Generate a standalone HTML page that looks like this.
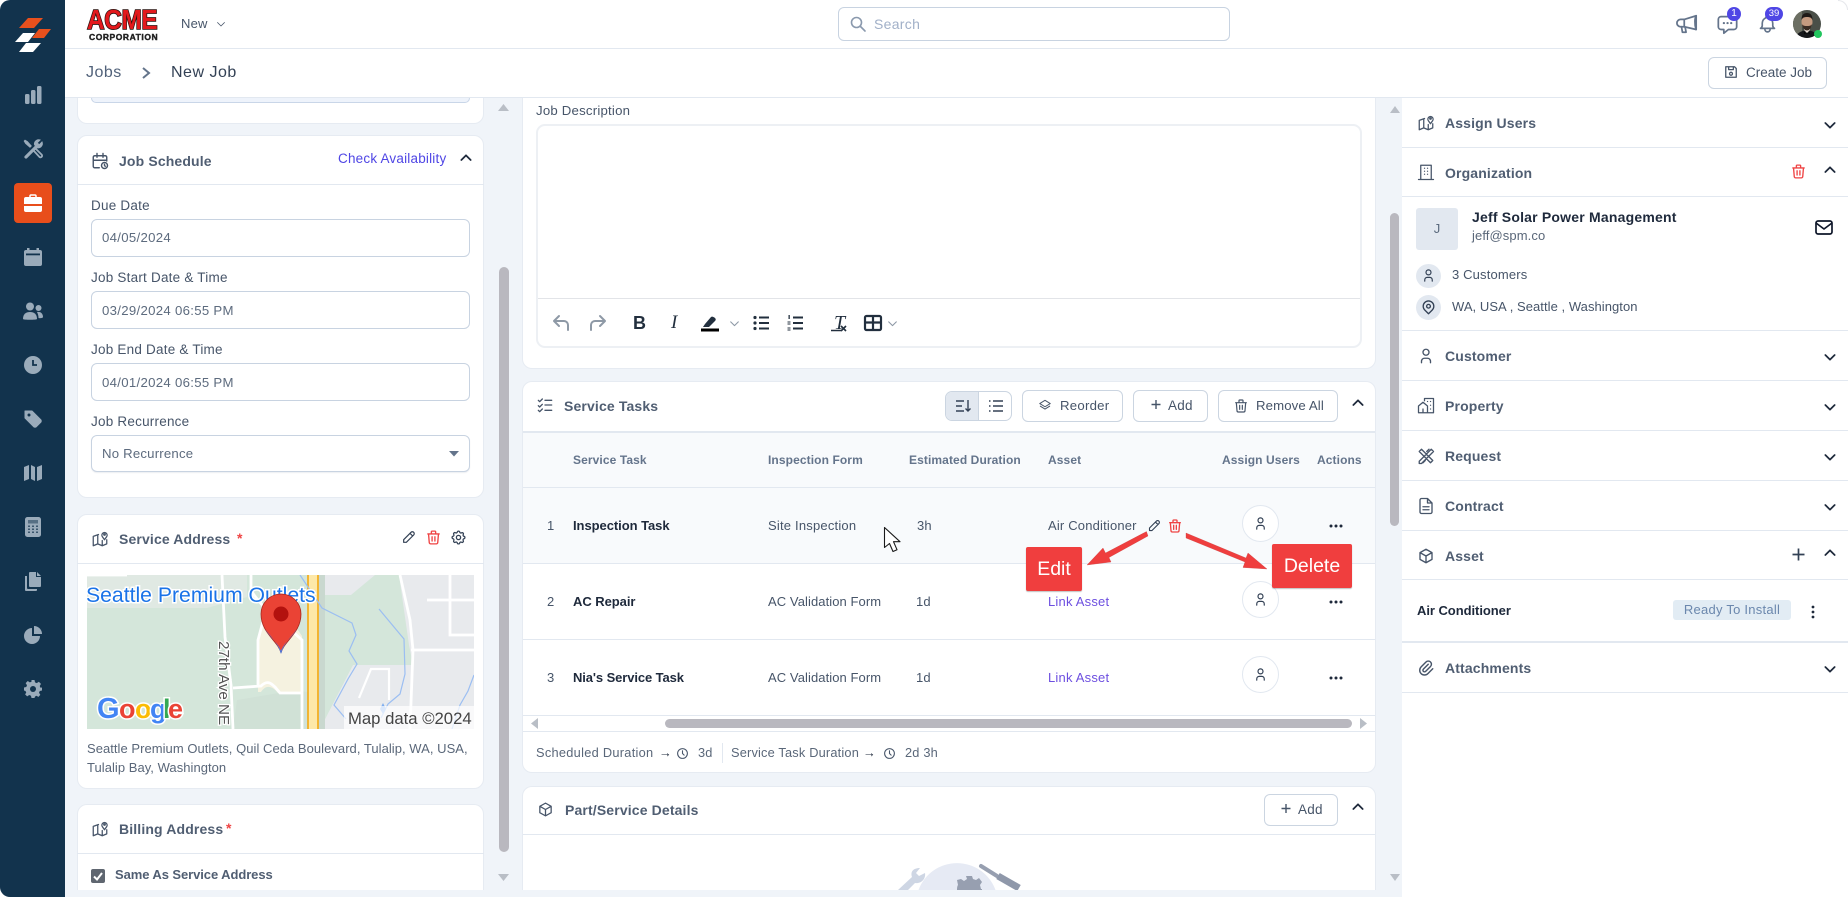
<!DOCTYPE html>
<html lang="en"><head><meta charset="utf-8"><title>New Job</title>
<style>
html,body{margin:0;padding:0;width:1848px;height:897px;overflow:hidden;background:#fff;font-family:"Liberation Sans",sans-serif;color:#475569}
*{box-sizing:border-box}
#root{position:relative;width:1848px;height:897px;overflow:hidden}
.a{position:absolute}
.t{position:absolute;white-space:nowrap;line-height:20px;font-size:13.5px;letter-spacing:.2px}
.h{font-weight:bold;font-size:14px;color:#505e72;letter-spacing:.14px}
.l{color:#475569;font-size:13.5px;letter-spacing:.22px}
.v{color:#5d6b7e;font-size:13.2px;letter-spacing:.3px}
.th{font-size:12px;font-weight:bold;color:#64748b;letter-spacing:.1px}
.card{position:absolute;background:#fff;border:1px solid #e6ebf2;border-radius:10px}
.inp{position:absolute;left:91px;width:379px;height:38px;background:#fff;border:1px solid #c8d3e1;border-radius:6px}
.btn{position:absolute;background:#fff;border:1px solid #cbd5e1;border-radius:6px}
.sep{position:absolute;left:1402px;width:446px;height:1px;background:#e2e8f0}
.rowline{position:absolute;left:523px;width:852px;height:1px;background:#e2e8f0}
svg{position:absolute;overflow:visible}
.s{fill:none;stroke:#475569;stroke-width:1.8;stroke-linecap:round;stroke-linejoin:round}
.dk{stroke:#1e293b}
.rd{stroke:#ef4444}
.f{fill:#9aabba}
</style></head><body><div id="root">
<svg width="0" height="0" style="position:absolute"><defs>
<symbol id="trash" viewBox="0 0 24 24"><path d="M4 7h16M10 11v6M14 11v6M5 7l1 12a2 2 0 0 0 2 2h8a2 2 0 0 0 2-2l1-12M9 7V4a1 1 0 0 1 1-1h4a1 1 0 0 1 1 1v3"/></symbol>
<symbol id="pencil" viewBox="0 0 24 24"><path d="M4 20h4L19 9a2.800 2.800 0 0 0-4-4L4 16v4M13.500 6.500l4 4"/></symbol>
<symbol id="gear" viewBox="0 0 24 24"><circle cx="12" cy="12" r="3"/><path d="M10.300 4.300c.4-1.800 3-1.800 3.400 0a1.700 1.700 0 0 0 2.600 1.100c1.500-.9 3.300.8 2.400 2.400a1.700 1.700 0 0 0 1 2.500c1.800.4 1.800 3 0 3.400a1.700 1.700 0 0 0-1 2.600c.9 1.500-.9 3.300-2.400 2.400a1.700 1.700 0 0 0-2.600 1c-.4 1.800-3 1.800-3.400 0a1.700 1.700 0 0 0-2.600-1c-1.500.9-3.300-.9-2.400-2.400a1.700 1.700 0 0 0-1-2.600c-1.800-.4-1.800-3 0-3.400a1.700 1.700 0 0 0 1-2.600c-.9-1.500.9-3.300 2.400-2.400 1 .6 2.300.1 2.600-1z"/></symbol>
<symbol id="person" viewBox="0 0 24 24"><circle cx="12" cy="7" r="4"/><path d="M6 21v-2a4 4 0 0 1 4-4h4a4 4 0 0 1 4 4v2"/></symbol>
<symbol id="mapi" viewBox="0 0 24 24"><path d="M10 6L3 8.500V21l6-2.500 6 2.500 6-2.500V13M9 6.500v12M15 14v7"/><circle cx="18" cy="6" r="1"/><path d="M18 13l-2.800-4a3.500 3.500 0 1 1 5.600 0z"/></symbol>
<symbol id="down" viewBox="0 0 24 24"><path d="M5 9l7 7 7-7"/></symbol>
<symbol id="up" viewBox="0 0 24 24"><path d="M5 15l7-7 7 7"/></symbol>
<symbol id="clock" viewBox="0 0 24 24"><circle cx="12" cy="12" r="9"/><path d="M12 7v5l3 3"/></symbol>
<symbol id="cube" viewBox="0 0 24 24"><path d="M12 3l8 4.500v9L12 21l-8-4.500v-9zM12 12l8-4.500M12 12v9M12 12L4 7.500"/></symbol>
</defs></svg>

<!-- bar & breadcrumb -->
<div class="a" style="left:65px;top:48px;width:1783px;height:1px;background:#e2e8f0"></div>
<div class="a" style="left:65px;top:97px;width:1783px;height:1px;background:#e2e8f0"></div>
<!-- content bg -->
<div class="a" style="left:65px;top:98px;width:1337px;height:799px;background:#f0f4f9"></div>

<!-- Logo -->
<div class="a" style="left:87px;top:5px;height:30px;font:bold 28px/30px 'Liberation Sans',sans-serif;color:#e3191c;letter-spacing:-.4px;-webkit-text-stroke:1.6px #26120f;paint-order:stroke fill;white-space:nowrap;transform:scaleX(.87);transform-origin:0 0">ACME</div>
<div class="t" style="left:89px;top:27px;font-size:8.5px;font-weight:bold;color:#222;letter-spacing:.55px;line-height:20px;-webkit-text-stroke:.4px #222">CORPORATION</div>
<div class="t" style="left:181px;top:14px;color:#475569;font-size:13px">New</div>
<svg class="s" style="left:215px;top:18px;stroke-width:1.6" width="12" height="12"><use href="#down" width="12" height="12"/></svg>

<!-- Search -->
<div class="a" style="left:838px;top:7px;width:392px;height:34px;border:1px solid #c8d3e1;border-radius:6px;background:#fff"></div>
<svg style="left:850px;top:16px" width="16" height="16" viewBox="0 0 16 16" fill="none" stroke="#8a99ad" stroke-width="1.600"><circle cx="6.500" cy="6.500" r="5"/><path d="M10.500 10.500l4.500 4.500" stroke-linecap="round"/></svg>
<div class="t" style="left:874px;top:14px;color:#a1b0c8;font-size:14px;letter-spacing:.3px">Search</div>

<!-- Top right icons -->
<svg style="left:1676px;top:13px" width="22" height="22" viewBox="0 0 24 24" fill="none" stroke="#64748b" stroke-width="1.900" stroke-linejoin="round" stroke-linecap="round"><path d="M22 3v15L9 15H5a3.500 3.500 0 0 1 0-8h4z"/><path d="M9 7v8M6 15l1 6h4l-1-5.500"/><path d="M22 3c-1.500 2-2 9-.2 15"/></svg>
<svg style="left:1716px;top:13px" width="23" height="22" viewBox="0 0 24 24" fill="none" stroke="#64748b" stroke-width="1.900" stroke-linejoin="round"><path d="M5 4h14a3 3 0 0 1 3 3v8a3 3 0 0 1-3 3h-6l-5 4v-4H5a3 3 0 0 1-3-3V7a3 3 0 0 1 3-3z"/><path d="M8 11h.1M12 11h.1M16 11h.1" stroke-width="2.400" stroke-linecap="round"/></svg>
<div class="a" style="left:1727px;top:7px;width:14px;height:14px;border-radius:50%;background:#4f46e5;color:#fff;font-size:10px;line-height:14px;text-align:center">1</div>
<svg style="left:1757px;top:13px" width="21" height="22" viewBox="0 0 24 24" fill="none" stroke="#64748b" stroke-width="1.900" stroke-linejoin="round" stroke-linecap="round"><path d="M10 5a2 2 0 1 1 4 0 7 7 0 0 1 4 6v3a4 4 0 0 0 2 3H4a4 4 0 0 0 2-3v-3a7 7 0 0 1 4-6M9 17v1a3 3 0 0 0 6 0v-1"/></svg>
<div class="a" style="left:1765px;top:7px;width:18px;height:14px;border-radius:7px;background:#4f46e5;color:#fff;font-size:9.500px;line-height:14px;text-align:center">39</div>
<svg style="left:1793px;top:10px" width="28" height="28" viewBox="0 0 28 28"><defs><clipPath id="av"><circle cx="14" cy="14" r="14"/></clipPath></defs><g clip-path="url(#av)"><rect width="28" height="28" fill="#4a4f48"/><rect x="0" width="9" height="28" fill="#6c6f63"/><path d="M3 28c1-6 6-7 11-8 5 1 10 2 11 8z" fill="#14161a"/><path d="M11 20l3 3 3-3v-3h-6z" fill="#e9dfd6"/><ellipse cx="14" cy="12" rx="5.500" ry="7" fill="#c49a80"/><path d="M8.500 10c0-5 2-7 5.500-7s5.500 2 5.500 7c-1-2-2-3-5.500-3s-4.500 1-5.500 3z" fill="#1f1a17"/><path d="M9 14c1 5 3 6.500 5 6.500s4-1.500 5-6.500c-1 2-3 2-5 2s-4 0-5-2z" fill="#3b2c24"/><path d="M12 23h4l1-1.500v3l-1-1h-4l-1 1v-3z" fill="#050505"/></g></svg>
<div class="a" style="left:1814px;top:30px;width:8px;height:8px;border-radius:50%;background:#22c55e"></div>
<div class="a" style="left:1838px;top:0;width:10px;height:10px;border:1px solid #e5e7eb;border-left:0;border-bottom:0;border-radius:0 10px 0 0"></div>

<!-- Breadcrumb -->
<div class="t" style="left:86px;top:63px;font-size:16px;color:#52627a;letter-spacing:.5px">Jobs</div>
<svg style="left:140px;top:66px" width="12" height="14" viewBox="0 0 12 14" fill="none" stroke="#64748b" stroke-width="2"><path d="M3 2l6 5-6 5"/></svg>
<div class="t" style="left:171px;top:63px;font-size:16px;color:#334155;letter-spacing:.5px">New Job</div>
<div class="btn" style="left:1708px;top:57px;width:119px;height:32px"></div>
<svg style="left:1724px;top:65px" width="14" height="14" viewBox="0 0 24 24" fill="none" stroke="#475569" stroke-width="2.200" stroke-linejoin="round"><path d="M3 3h15l3 3v15H3z"/><path d="M8 3v5h8V3"/><circle cx="12" cy="15" r="2.500"/></svg>
<div class="t" style="left:1746px;top:63px;font-size:13.5px;color:#475569;letter-spacing:0">Create Job</div>

<!-- LEFT COLUMN -->
<div class="card" style="left:77px;top:98px;width:407px;height:26px;border-top:0;border-radius:0 0 10px 10px"></div>
<div class="a" style="left:91px;top:98px;width:379px;height:5px;background:#eef3fb;border:1px solid #c9d6e8;border-radius:0 0 6px 6px;border-top:0"></div>

<div class="card" style="left:77px;top:135px;width:407px;height:363px"></div>
<div class="a" style="left:77px;top:184px;width:407px;height:1px;background:#e2e8f0"></div>
<svg class="s" style="left:91px;top:152px;stroke-width:1.900" width="18" height="18" viewBox="0 0 24 24"><path d="M11 21H5a2 2 0 0 1-2-2V7a2 2 0 0 1 2-2h14a2 2 0 0 1 2 2v5M16 2v5M8 2v5M3 11h18"/><circle cx="18" cy="18" r="4"/><path d="M18 16.500V18l1 1"/></svg>
<div class="t h" style="left:119px;top:151px">Job Schedule</div>
<div class="t" style="left:338px;top:149px;color:#4f46e5;font-size:13.5px;letter-spacing:.2px">Check Availability</div>
<svg class="s dk" style="left:458px;top:150px;stroke-width:2.600" width="16" height="16"><use href="#up" width="16" height="16"/></svg>

<div class="t l" style="left:91px;top:196px">Due Date</div>
<div class="inp" style="top:219px"></div>
<div class="t v" style="left:102px;top:228px">04/05/2024</div>
<div class="t l" style="left:91px;top:268px">Job Start Date &amp; Time</div>
<div class="inp" style="top:291px"></div>
<div class="t v" style="left:102px;top:301px">03/29/2024 06:55 PM</div>
<div class="t l" style="left:91px;top:340px">Job End Date &amp; Time</div>
<div class="inp" style="top:363px"></div>
<div class="t v" style="left:102px;top:373px">04/01/2024 06:55 PM</div>
<div class="t l" style="left:91px;top:412px">Job Recurrence</div>
<div class="inp" style="top:435px;height:37px;box-shadow:0 1px 1px rgba(100,116,139,.12)"></div>
<div class="t v" style="left:102px;top:444px;letter-spacing:.2px">No Recurrence</div>
<svg style="left:449px;top:451px" width="10" height="6"><path d="M0 0h10L5 5.500z" fill="#64748b"/></svg>

<div class="card" style="left:77px;top:514px;width:407px;height:275px"></div>
<div class="a" style="left:77px;top:563px;width:407px;height:1px;background:#e2e8f0"></div>
<svg class="s" style="left:91px;top:530px;stroke-width:1.700" width="18" height="18"><use href="#mapi" width="18" height="18"/></svg>
<div class="t h" style="left:119px;top:529px">Service Address</div>
<div class="t" style="left:237px;top:528px;color:#ef4444;font-size:14px;font-weight:bold">*</div>
<svg class="s dk" style="left:401px;top:529px;stroke:#334155" width="16" height="16"><use href="#pencil" width="16" height="16"/></svg>
<svg class="s rd" style="left:425px;top:529px;stroke-width:1.900" width="17" height="17"><use href="#trash" width="17" height="17"/></svg>
<svg class="s dk" style="left:450px;top:529px;stroke:#334155" width="17" height="17"><use href="#gear" width="17" height="17"/></svg>

<!-- Map -->
<svg style="left:87px;top:575px;overflow:hidden" width="387" height="154" viewBox="0 0 387 154">
<rect width="387" height="154" fill="#d4e6da"/>
<path d="M30 0h130v22L120 33H0V0z" fill="#e0e9e3"/>
<path d="M238 0h50l-24 20h-26z" fill="#e8eaed"/>
<path d="M312 0h75v154h-60v-5L326 90 322 70z" fill="#e8eaed"/>
<path d="M266 90h62v64h-95z" fill="#e8eaed"/>
<path d="M150 125l60-10 25 5v34H146z" fill="#d0e1d6"/>
<path d="M232 0h6v154h-6z" fill="#c9d8cf"/>
<path d="M171 64l9-24 24 5 11 16v57h-24c-8-10-14-6-17-1h-3z" fill="#f5f2e0"/>
<g fill="none" stroke="#fff" stroke-width="2.800">
<path d="M135 0l3 62 6 48 2 44"/><path d="M146 113l28-2c6-6 10-3 14 1l5 6h22M215 118v36M171 111V65l7-26c2-8-8-12-14-24V0M182 35l33 30v53"/>
<path d="M313 0l10 45 3 30-3 79M0 0h40M340 25h47M324 75h63M363 0v60h24"/>
<path d="M272 123l12-29h18v31" stroke-width="2.200"/>
</g>
<path d="M221 0h10v154h-10z" fill="#fde8a8"/><path d="M221 0v154M231 0v154" stroke="#f4a80f" stroke-width="1.600"/>
<g fill="none" stroke="#9bbef2" stroke-width="1.200">
<path d="M213 0l22 33 30 15 4 12-7 16 8 13-9 15-14 26 12 14M292 34l25 30 1 35-5 20-12 10-7 14"/><path d="M387 100l-6 16-8 14-8 24"/></g>
<path d="M296 128l-3 6 3 5 3-5z" fill="#7eaef0"/>
<rect x="257" y="131" width="130" height="23" fill="#fff" opacity=".72"/>
<text x="-1" y="27" font-family="'Liberation Sans',sans-serif" font-size="21.2" fill="#1a73e8" stroke="#fff" stroke-width="3" paint-order="stroke">Seattle Premium Outlets</text>
<path d="M194 78c-3-12-20-20-20-39a20 20 0 0 1 40 0c0 19-17 27-20 39z" fill="#ea4335" stroke="#a8291f" stroke-width=".8"/>
<path d="M178 54c6 8 13 14 16 25 3-11 10-17 16-25-5 8-13 14-16 22-3-8-11-14-16-22z" fill="#3b82f6"/>
<circle cx="194" cy="39" r="7.500" fill="#b3120e"/>
<text transform="translate(132,66) rotate(90)" font-family="'Liberation Sans',sans-serif" font-size="15.2" fill="#555" stroke="#fff" stroke-width="2.500" paint-order="stroke">27th Ave NE</text>
<g font-family="'Liberation Sans',sans-serif" font-size="27" font-weight="bold" stroke="#fff" stroke-width="3" paint-order="stroke"><text x="10" y="143" fill="#4285f4" font-size="29">G</text><text x="32" y="143" fill="#ea4335">o</text><text x="48" y="143" fill="#fbbc04">o</text><text x="63" y="143" fill="#4285f4">g</text><text x="76" y="143" fill="#34a853">l</text><text x="81" y="143" fill="#ea4335">e</text></g>
<text x="261" y="149" font-family="'Liberation Sans',sans-serif" font-size="16.7" fill="#444">Map data ©2024</text>
</svg>
<div class="t" style="left:87px;top:739px;font-size:13px;color:#5a6779;letter-spacing:.04px">Seattle Premium Outlets, Quil Ceda Boulevard, Tulalip, WA, USA,</div>
<div class="t" style="left:87px;top:758px;font-size:13px;color:#5a6779;letter-spacing:.04px">Tulalip Bay, Washington</div>

<div class="card" style="left:77px;top:804px;width:407px;height:86px;border-bottom:0;border-radius:10px 10px 0 0"></div>
<div class="a" style="left:77px;top:853px;width:407px;height:1px;background:#e2e8f0"></div>
<svg class="s" style="left:91px;top:820px;stroke-width:1.700" width="18" height="18"><use href="#mapi" width="18" height="18"/></svg>
<div class="t h" style="left:119px;top:819px">Billing Address</div>
<div class="t" style="left:226px;top:818px;color:#ef4444;font-size:14px;font-weight:bold">*</div>
<div class="a" style="left:91px;top:869px;width:14px;height:14px;background:#5f6670;border-radius:2px"></div>
<svg style="left:91px;top:869px" width="14" height="14" viewBox="0 0 14 14" fill="none" stroke="#fff" stroke-width="2"><path d="M3 7.500l3 3 5-6.500"/></svg>
<div class="t" style="left:115px;top:865px;font-size:13px;font-weight:bold;color:#505e72;letter-spacing:-.08px">Same As Service Address</div>

<!-- left scrollbar -->
<div class="a" style="left:499px;top:267px;width:10px;height:585px;background:#b9b8bf;border-radius:5px"></div>
<svg style="left:498px;top:104px" width="11" height="8"><path d="M5.500 0L11 7H0z" fill="#b9bec6"/></svg>
<svg style="left:498px;top:874px" width="11" height="8"><path d="M0 0h11L5.500 7z" fill="#b9bec6"/></svg>

<!-- MIDDLE -->
<div class="card" style="left:522px;top:98px;width:854px;height:271px;border-top:0;border-radius:0 0 10px 10px"></div>
<div class="t l" style="left:536px;top:101px;font-size:13.2px">Job Description</div>
<div class="a" style="left:536px;top:124px;width:826px;height:224px;border:2px solid #edf0f4;border-radius:9px"></div>
<div class="a" style="left:538px;top:298px;width:822px;height:1px;background:#e2e4e8"></div>
<svg style="left:552px;top:313px" width="18" height="20" viewBox="0 0 18 20" fill="none" stroke="#8e99a6" stroke-width="2" stroke-linecap="round" stroke-linejoin="round"><path d="M7 3L2 8l5 5M2 8h10a4 4 0 0 1 4 4v5"/></svg>
<svg style="left:589px;top:313px" width="18" height="20" viewBox="0 0 18 20" fill="none" stroke="#8e99a6" stroke-width="2" stroke-linecap="round" stroke-linejoin="round"><path d="M11 3l5 5-5 5M16 8H6a4 4 0 0 0-4 4v5"/></svg>
<div class="t" style="left:633px;top:312px;font:bold 18px/22px 'Liberation Sans',sans-serif;color:#222f3e">B</div>
<div class="t" style="left:671px;top:312px;font:italic 19px/22px 'Liberation Serif',serif;color:#222f3e">I</div>
<svg style="left:701px;top:314px" width="18" height="18" viewBox="0 0 18 18"><path d="M4 10l6-7c1-1 3 0 4 1s1 2 0 3l-6 6H2z" fill="#222f3e"/><rect y="14.500" width="18" height="3" fill="#000"/></svg>
<svg class="s" style="left:728px;top:317px;stroke:#8e99a6;stroke-width:2" width="13" height="13"><use href="#down" width="13" height="13"/></svg>
<svg style="left:753px;top:315px" width="16" height="16" viewBox="0 0 16 16" fill="#222f3e"><circle cx="2" cy="2.500" r="1.600"/><circle cx="2" cy="8" r="1.600"/><circle cx="2" cy="13.500" r="1.600"/><rect x="6" y="1.500" width="10" height="2"/><rect x="6" y="7" width="10" height="2"/><rect x="6" y="12.500" width="10" height="2"/></svg>
<svg style="left:787px;top:315px" width="16" height="16" viewBox="0 0 16 16" fill="#222f3e"><rect x="1.500" y="0" width="1.300" height="4"/><rect x="0.500" y="6.500" width="3" height="1"/><rect x="0.500" y="8.500" width="3" height="1"/><rect x="0.500" y="12.500" width="3" height="1"/><rect x="0.500" y="14.500" width="3" height="1"/><rect x="6" y="1.500" width="10" height="2"/><rect x="6" y="7" width="10" height="2"/><rect x="6" y="12.500" width="10" height="2"/></svg>
<div class="t" style="left:834px;top:313px;font:italic 20px/20px 'Liberation Serif',serif;color:#222f3e">T</div>
<svg style="left:831px;top:315px" width="16" height="17" viewBox="0 0 16 17" fill="none" stroke="#222f3e" stroke-width="1.600"><path d="M0 15.500h10M10 11l5 5M15 11l-5 5"/></svg>
<svg style="left:864px;top:315px" width="18" height="16" viewBox="0 0 18 16" fill="none" stroke="#222f3e" stroke-width="2.200"><rect x="1" y="1" width="16" height="14" rx="1.500"/><path d="M1 7.500h16M9 2v13"/></svg>
<svg class="s" style="left:886px;top:317px;stroke:#8e99a6;stroke-width:2" width="13" height="13"><use href="#down" width="13" height="13"/></svg>

<!-- Service Tasks -->
<div class="card" style="left:522px;top:381px;width:854px;height:392px"></div>
<div class="a" style="left:523px;top:431px;width:852px;height:2px;background:#e2e8f0"></div>
<svg class="s" style="left:537px;top:397px;stroke-width:2" width="16" height="16" viewBox="0 0 24 24"><path d="M2 5l2 2 4-4M2 13l2 2 4-4M2 20l2 2 4-4M12 5h10M12 12h10M12 20h10"/></svg>
<div class="t h" style="left:564px;top:396px">Service Tasks</div>
<div class="a" style="left:945px;top:391px;width:67px;height:30px;border:1px solid #cbd5e1;border-radius:7px;background:#fff;overflow:hidden"><div style="width:33px;height:28px;background:#e2e8f0;border-right:1px solid #cbd5e1"></div></div>
<svg style="left:956px;top:399px" width="15" height="14" viewBox="0 0 15 14" fill="none" stroke="#334155" stroke-width="1.400"><path d="M0 2h8M0 7h6M0 12h8M12 1v11M9.500 9.500L12 12l2.500-2.500"/></svg>
<svg style="left:989px;top:399px" width="14" height="14" viewBox="0 0 14 14" fill="none" stroke="#334155" stroke-width="1.400"><path d="M4 2h10M4 7h10M4 12h10M0 2h1.500M0 7h1.500M0 12h1.500"/></svg>
<div class="btn" style="left:1022px;top:390px;width:101px;height:32px"></div>
<svg class="s" style="left:1038px;top:398px;stroke-width:1.700" width="14" height="14" viewBox="0 0 24 24"><path d="M12 4L3 9.500l9 5.500 9-5.500z"/><path d="M4 14l8 5 8-5"/></svg>
<div class="t" style="left:1060px;top:396px;font-size:13.2px;letter-spacing:.25px">Reorder</div>
<div class="btn" style="left:1133px;top:390px;width:75px;height:32px"></div>
<svg style="left:1150px;top:399px" width="12" height="12" viewBox="0 0 12 12" stroke="#475569" stroke-width="1.400"><path d="M6 1v9M1.500 5.500h9"/></svg>
<div class="t" style="left:1168px;top:396px;font-size:13.5px;letter-spacing:.25px">Add</div>
<div class="btn" style="left:1218px;top:390px;width:120px;height:32px"></div>
<svg class="s" style="left:1233px;top:398px" width="16" height="16"><use href="#trash" width="16" height="16"/></svg>
<div class="t" style="left:1256px;top:396px;font-size:13.2px;letter-spacing:.12px">Remove All</div>
<svg class="s dk" style="left:1350px;top:395px;stroke-width:2.600" width="16" height="16"><use href="#up" width="16" height="16"/></svg>

<!-- table -->
<div class="a" style="left:523px;top:433px;width:852px;height:131px;background:#f8fafc"></div>
<div class="rowline" style="top:487px"></div><div class="rowline" style="top:563px"></div><div class="rowline" style="top:639px"></div><div class="rowline" style="top:715px"></div><div class="rowline" style="top:731px"></div>
<div class="t th" style="left:573px;top:450px">Service Task</div>
<div class="t th" style="left:768px;top:450px">Inspection Form</div>
<div class="t th" style="left:909px;top:450px">Estimated Duration</div>
<div class="t th" style="left:1048px;top:450px">Asset</div>
<div class="t th" style="left:1222px;top:450px">Assign Users</div>
<div class="t th" style="left:1317px;top:450px">Actions</div>

<div class="t" style="left:547px;top:516px;font-size:13px;color:#475569">1</div>
<div class="t" style="left:573px;top:516px;font-size:13px;font-weight:bold;color:#1e293b;letter-spacing:-.05px">Inspection Task</div>
<div class="t" style="left:768px;top:516px;font-size:13px;color:#475569;letter-spacing:.2px">Site Inspection</div>
<div class="t" style="left:917px;top:516px;font-size:13px;color:#475569">3h</div>
<div class="t" style="left:1048px;top:516px;font-size:13px;color:#475569;letter-spacing:.18px">Air Conditioner</div>
<svg class="s" style="left:1147px;top:518px;stroke:#334155" width="15" height="15"><use href="#pencil" width="15" height="15"/></svg>
<svg class="s rd" style="left:1167px;top:518px;stroke-width:2" width="16" height="16"><use href="#trash" width="16" height="16"/></svg>

<div class="t" style="left:547px;top:592px;font-size:13px;color:#475569">2</div>
<div class="t" style="left:573px;top:592px;font-size:13px;font-weight:bold;color:#1e293b;letter-spacing:-.05px">AC Repair</div>
<div class="t" style="left:768px;top:592px;font-size:13px;color:#475569;letter-spacing:.08px">AC Validation Form</div>
<div class="t" style="left:916px;top:592px;font-size:13px;color:#475569">1d</div>
<div class="t" style="left:1048px;top:592px;font-size:13px;color:#6d4fe0;letter-spacing:.2px">Link Asset</div>

<div class="t" style="left:547px;top:668px;font-size:13px;color:#475569">3</div>
<div class="t" style="left:573px;top:668px;font-size:13px;font-weight:bold;color:#1e293b;letter-spacing:-.1px">Nia's Service Task</div>
<div class="t" style="left:768px;top:668px;font-size:13px;color:#475569;letter-spacing:.08px">AC Validation Form</div>
<div class="t" style="left:916px;top:668px;font-size:13px;color:#475569">1d</div>
<div class="t" style="left:1048px;top:668px;font-size:13px;color:#6d4fe0;letter-spacing:.2px">Link Asset</div>

<div class="a" style="left:1242px;top:505px;width:37px;height:37px;border:1px solid #e2e8f0;border-radius:50%;background:#fff"></div>
<div class="a" style="left:1242px;top:581px;width:37px;height:37px;border:1px solid #e2e8f0;border-radius:50%;background:#fff"></div>
<div class="a" style="left:1242px;top:656px;width:37px;height:37px;border:1px solid #e2e8f0;border-radius:50%;background:#fff"></div>
<svg class="s" style="left:1253px;top:516px;stroke-width:1.900;stroke:#334155" width="15" height="15"><use href="#person" width="15" height="15"/></svg>
<svg class="s" style="left:1253px;top:592px;stroke-width:1.900;stroke:#334155" width="15" height="15"><use href="#person" width="15" height="15"/></svg>
<svg class="s" style="left:1253px;top:667px;stroke-width:1.900;stroke:#334155" width="15" height="15"><use href="#person" width="15" height="15"/></svg>
<svg style="left:1329px;top:524px" width="14" height="4" fill="#1e293b"><circle cx="2" cy="2" r="1.500"/><circle cx="7" cy="2" r="1.500"/><circle cx="12" cy="2" r="1.500"/></svg>
<svg style="left:1329px;top:600px" width="14" height="4" fill="#1e293b"><circle cx="2" cy="2" r="1.500"/><circle cx="7" cy="2" r="1.500"/><circle cx="12" cy="2" r="1.500"/></svg>
<svg style="left:1329px;top:676px" width="14" height="4" fill="#1e293b"><circle cx="2" cy="2" r="1.500"/><circle cx="7" cy="2" r="1.500"/><circle cx="12" cy="2" r="1.500"/></svg>

<!-- cursor -->
<svg style="left:883px;top:526px" width="20" height="28" viewBox="0 0 20 28"><path d="M1.500 1.500v20l5-4 3.500 8 4-1.800-3.500-8h6.500z" fill="#fff" stroke="#1a1a1a" stroke-width="1.100" stroke-linejoin="round"/></svg>

<!-- annotations -->
<svg style="left:1080px;top:528px" width="200" height="50" viewBox="0 0 200 50" fill="#ef3e3e" stroke="#c53a3a" stroke-width=".3">
<path d="M66.500 3.500L68 8 29 29.500 31 34 7 37 23 20 25.500 25z"/>
<path d="M106 5L166 30 168 25 187 41 163 39.500 165 34 106 10z"/>
</svg>
<div class="a" style="left:1026px;top:547px;width:56px;height:44px;background:#f03e3e;border-radius:2px;color:#fff;font-size:19.5px;line-height:44px;text-align:center;box-shadow:0 1px 1px rgba(0,0,0,.25)">Edit</div>
<div class="a" style="left:1272px;top:544px;width:80px;height:44px;background:#f03e3e;border-radius:2px;color:#fff;font-size:19.5px;line-height:45px;text-align:center;box-shadow:0 1px 1px rgba(0,0,0,.25)">Delete</div>

<!-- table h-scroll -->
<div class="a" style="left:665px;top:719px;width:687px;height:9px;background:#b9b8bf;border-radius:5px"></div>
<svg style="left:531px;top:718px" width="8" height="11"><path d="M7 0v11L0 5.500z" fill="#b9bec6"/></svg>
<svg style="left:1360px;top:718px" width="8" height="11"><path d="M0 0v11l7-5.500z" fill="#b9bec6"/></svg>

<!-- footer -->
<div class="t" style="left:536px;top:743px;font-size:12.8px;color:#5a6779;letter-spacing:.28px">Scheduled Duration</div>
<div class="t" style="left:659px;top:743px;font-size:12.8px;color:#1e293b">→</div>
<svg class="s" style="left:676px;top:747px;stroke-width:2" width="13" height="13"><use href="#clock" width="13" height="13"/></svg>
<div class="t" style="left:698px;top:743px;font-size:12.8px;color:#5a6779;letter-spacing:.18px">3d</div>
<div class="a" style="left:722px;top:743px;width:1px;height:20px;background:#e2e8f0"></div>
<div class="t" style="left:731px;top:743px;font-size:12.8px;color:#5a6779;letter-spacing:.18px">Service Task Duration</div>
<div class="t" style="left:863px;top:743px;font-size:12.8px;color:#1e293b">→</div>
<svg class="s" style="left:883px;top:747px;stroke-width:2" width="13" height="13"><use href="#clock" width="13" height="13"/></svg>
<div class="t" style="left:905px;top:743px;font-size:12.8px;color:#5a6779;letter-spacing:.18px">2d 3h</div>

<!-- Part/service -->
<div class="card" style="left:522px;top:786px;width:854px;height:104px;border-bottom:0;border-radius:10px 10px 0 0"></div>
<div class="a" style="left:523px;top:834px;width:852px;height:1px;background:#e2e8f0"></div>
<svg class="s" style="left:537px;top:801px" width="17" height="17"><use href="#cube" width="17" height="17"/></svg>
<div class="t h" style="left:565px;top:800px">Part/Service Details</div>
<div class="btn" style="left:1264px;top:794px;width:74px;height:32px"></div>
<svg style="left:1280px;top:803px" width="12" height="12" viewBox="0 0 12 12" stroke="#475569" stroke-width="1.400"><path d="M6 1v9M1.500 5.500h9"/></svg>
<div class="t" style="left:1298px;top:800px;font-size:13.5px;letter-spacing:.25px">Add</div>
<svg class="s dk" style="left:1350px;top:799px;stroke-width:2.600" width="16" height="16"><use href="#up" width="16" height="16"/></svg>
<svg style="left:860px;top:840px;overflow:hidden" width="200" height="50" viewBox="0 0 200 50">
<path d="M58.500 50A41 41 0 0 1 135.500 50Z" fill="#e6eaf4"/>
<path d="M38 50L52 37c-2-6 2-9 8-9l-4 5 3 3 6-3c1 6-4 11-10 10L48 50z" fill="#ced6e4"/>
<path d="M97 50c0-4 1-5 1-5l-1-5 4-1 3 2 3-2-1-3h6l1 3 3 1 3-2 3 4-2 3 1 4h1v1z" fill="#979fb0"/>
<path d="M121 26l16 10" stroke="#979fb0" stroke-width="4" stroke-linecap="round"/>
<path d="M138 36l21 12" stroke="#8f98aa" stroke-width="7"/>
</svg>

<!-- Middle scrollbar -->
<div class="a" style="left:1390px;top:213px;width:9px;height:313px;background:#b9b8bf;border-radius:5px"></div>
<svg style="left:1390px;top:106px" width="10" height="8"><path d="M5 0l5 7H0z" fill="#b9bec6"/></svg>
<svg style="left:1390px;top:874px" width="10" height="8"><path d="M0 0h10L5 7z" fill="#b9bec6"/></svg>

<!-- bottom strip -->
<div class="a" style="left:65px;top:890px;width:1337px;height:7px;background:#f0f4f9"></div>

<!-- RIGHT -->
<div class="a" style="left:1402px;top:98px;width:446px;height:799px;background:#fff"></div>
<svg class="s" style="left:1417px;top:114px;stroke-width:1.700" width="18" height="18"><use href="#mapi" width="18" height="18"/></svg>
<div class="t h" style="left:1445px;top:113px">Assign Users</div>
<svg class="s dk" style="left:1822px;top:117px;stroke-width:2.600" width="16" height="16"><use href="#down" width="16" height="16"/></svg>
<div class="sep" style="top:147px"></div>
<svg class="s" style="left:1417px;top:163px;stroke-width:1.700" width="18" height="18" viewBox="0 0 24 24"><path d="M2 22h20M5 22V3h14v19M10 7h.1M14 7h.1M10 11h.1M14 11h.1M10 15h.1M14 15h.1"/></svg>
<div class="t h" style="left:1445px;top:163px">Organization</div>
<svg class="s rd" style="left:1790px;top:163px;stroke-width:1.900" width="17" height="17"><use href="#trash" width="17" height="17"/></svg>
<svg class="s dk" style="left:1822px;top:162px;stroke-width:2.600" width="16" height="16"><use href="#up" width="16" height="16"/></svg>
<div class="sep" style="top:196px"></div>
<div class="a" style="left:1416px;top:208px;width:42px;height:42px;background:#e2e8f0;border-radius:3px;color:#5b6a7e;font-size:13px;line-height:42px;text-align:center">J</div>
<div class="t" style="left:1472px;top:207px;font-size:14px;font-weight:bold;color:#1e293b;letter-spacing:.2px">Jeff Solar Power Management</div>
<div class="t" style="left:1472px;top:226px;font-size:13px;color:#5a6779;letter-spacing:.1px">jeff@spm.co</div>
<svg style="left:1815px;top:220px" width="18" height="15" viewBox="0 0 18 15" fill="none" stroke="#0f172a" stroke-width="1.700" stroke-linejoin="round"><rect x="1" y="1" width="16" height="13" rx="2"/><path d="M1 3l8 6 8-6"/></svg>
<div class="a" style="left:1416px;top:264px;width:25px;height:24px;border-radius:50%;background:#e2e8f0"></div>
<svg class="s" style="left:1421px;top:268px;stroke:#334155;stroke-width:1.900" width="15" height="15"><use href="#person" width="15" height="15"/></svg>
<div class="t" style="left:1452px;top:265px;font-size:13px;color:#475569;letter-spacing:.15px">3 Customers</div>
<div class="a" style="left:1416px;top:295px;width:25px;height:25px;border-radius:50%;background:#e2e8f0"></div>
<svg style="left:1421px;top:300px" width="15" height="15" viewBox="0 0 24 24" fill="none" stroke="#334155" stroke-width="2.100"><circle cx="12" cy="10" r="3"/><path d="M12 22l-6-6a8.500 8.500 0 1 1 12 0z" stroke-linejoin="round"/></svg>
<div class="t" style="left:1452px;top:297px;font-size:13px;color:#475569;letter-spacing:.05px">WA, USA , Seattle , Washington</div>
<div class="sep" style="top:330px"></div>

<svg class="s" style="left:1417px;top:347px" width="18" height="18"><use href="#person" width="18" height="18"/></svg>
<div class="t h" style="left:1445px;top:346px">Customer</div>
<svg class="s dk" style="left:1822px;top:349px;stroke-width:2.600" width="16" height="16"><use href="#down" width="16" height="16"/></svg>
<div class="sep" style="top:380px"></div>

<svg class="s" style="left:1417px;top:397px;stroke-width:1.700" width="18" height="18" viewBox="0 0 24 24"><path d="M2 21v-9l6-5 6 5v9zM8 21v-5M10 5V2h12v19h-8M14 6h.1M18 6h.1M18 11h.1M18 16h.1"/></svg>
<div class="t h" style="left:1445px;top:396px">Property</div>
<svg class="s dk" style="left:1822px;top:399px;stroke-width:2.600" width="16" height="16"><use href="#down" width="16" height="16"/></svg>
<div class="sep" style="top:430px"></div>

<svg class="s" style="left:1417px;top:447px;stroke-width:1.800" width="18" height="18" viewBox="0 0 24 24"><path d="M3 19l16-16 3 3L6 22H3zM6 3L3 6l15 15 3-3zM13 6l3-3M8 21l3-3"/></svg>
<div class="t h" style="left:1445px;top:446px">Request</div>
<svg class="s dk" style="left:1822px;top:449px;stroke-width:2.600" width="16" height="16"><use href="#down" width="16" height="16"/></svg>
<div class="sep" style="top:480px"></div>

<svg class="s" style="left:1417px;top:497px;stroke-width:1.800" width="18" height="18" viewBox="0 0 24 24"><path d="M14 2H6a2 2 0 0 0-2 2v16a2 2 0 0 0 2 2h12a2 2 0 0 0 2-2V8zM14 2v6h6M8 13h8M8 17h8"/></svg>
<div class="t h" style="left:1445px;top:496px">Contract</div>
<svg class="s dk" style="left:1822px;top:499px;stroke-width:2.600" width="16" height="16"><use href="#down" width="16" height="16"/></svg>
<div class="sep" style="top:530px"></div>

<svg class="s" style="left:1417px;top:547px" width="18" height="18"><use href="#cube" width="18" height="18"/></svg>
<div class="t h" style="left:1445px;top:546px">Asset</div>
<svg style="left:1791px;top:547px" width="15" height="15" viewBox="0 0 15 15" stroke="#334155" stroke-width="1.700"><path d="M7.500 1.500v12M1.500 7.500h12"/></svg>
<svg class="s dk" style="left:1822px;top:545px;stroke-width:2.600" width="16" height="16"><use href="#up" width="16" height="16"/></svg>
<div class="sep" style="top:579px"></div>
<div class="t" style="left:1417px;top:601px;font-size:13px;font-weight:bold;color:#1e293b;letter-spacing:-.05px">Air Conditioner</div>
<div class="a" style="left:1673px;top:600px;width:118px;height:20px;background:#e2ecf4;border-radius:3px;color:#6b87ad;font-size:13px;line-height:19px;text-align:center;letter-spacing:.25px">Ready To Install</div>
<svg style="left:1811px;top:605px" width="4" height="14" fill="#1e293b"><circle cx="2" cy="2" r="1.400"/><circle cx="2" cy="7" r="1.400"/><circle cx="2" cy="12" r="1.400"/></svg>
<div class="sep" style="top:641px;height:2px"></div>
<svg class="s" style="left:1417px;top:659px;stroke-width:1.900" width="18" height="18" viewBox="0 0 24 24"><path d="M15 7l-6.500 6.500a1.500 1.500 0 0 0 3 3L18 10a3 3 0 0 0-6-6l-6.500 6.500a4.500 4.500 0 0 0 9 9L21 13"/></svg>
<div class="t h" style="left:1445px;top:658px">Attachments</div>
<svg class="s dk" style="left:1822px;top:661px;stroke-width:2.600" width="16" height="16"><use href="#down" width="16" height="16"/></svg>
<div class="sep" style="top:692px"></div>

<!-- SIDEBAR -->
<div class="a" style="left:0;top:0;width:65px;height:897px;background:#12334d;border-radius:10px 0 0 10px"></div>
<svg style="left:14px;top:17px" width="38" height="37" viewBox="0 0 38 37"><path d="M14 1h15l-9 10H5z" fill="#e8501d"/><path d="M25 12h12l-7 9H18z" fill="#e8501d"/><path d="M9 16h12l-7 9H1z" fill="#fff"/><path d="M12 26h15l-8 9H5z" fill="#fff"/></svg>
<svg style="left:24px;top:85px" width="18" height="20" viewBox="0 0 18 20" class="f"><rect x="1" y="9" width="4.500" height="10" rx="1.500"/><rect x="7" y="5" width="4.500" height="14" rx="1.500"/><rect x="13" y="1" width="4.500" height="18" rx="1.500"/></svg>
<svg style="left:23px;top:139px" width="20" height="20" viewBox="0 0 20 20" fill="none" stroke="#9aabba"><path d="M3 18L13 8" stroke-width="3.200" stroke-linecap="round"/><path d="M11.500 5.500a4.200 4.200 0 0 1 5.500-4.500l-2.800 2.800 2 2 2.800-2.800a4.200 4.200 0 0 1-5.500 5.500z" fill="#9aabba" stroke-width="1"/><path d="M2 1l2.500 1.500L8.500 7 7 8.500 2.500 4.500 1 2z" fill="#9aabba" stroke-width=".6"/><path d="M10.500 11.500l2-2 6 6a1.600 1.600 0 0 1-2 2.500z" fill="none" stroke-width="1.800"/></svg>
<div class="a" style="left:14px;top:183px;width:38px;height:40px;background:#e84e1b;border-radius:4px"></div>
<svg style="left:24px;top:193px" width="18" height="20" viewBox="0 0 18 20"><path d="M6 5V3a1 1 0 0 1 1-1h4a1 1 0 0 1 1 1v2" fill="none" stroke="#fff" stroke-width="1.500"/><path d="M2 4h14a2 2 0 0 1 2 2v5H0V6a2 2 0 0 1 2-2z" fill="#fff"/><path d="M0 13h18v4a2 2 0 0 1-2 2H2a2 2 0 0 1-2-2z" fill="#fff"/></svg>
<svg style="left:24px;top:248px" width="18" height="18" viewBox="0 0 18 18" class="f"><rect x="3" width="2.500" height="4"/><rect x="12.500" width="2.500" height="4"/><path d="M2 2h14a2 2 0 0 1 2 2v12a2 2 0 0 1-2 2H2a2 2 0 0 1-2-2V4a2 2 0 0 1 2-2z"/><rect x="2" y="5.500" width="14" height="1.800" fill="#12334d"/></svg>
<svg style="left:23px;top:302px" width="20" height="18" viewBox="0 0 20 18" class="f"><circle cx="7" cy="4.500" r="4"/><circle cx="15.500" cy="6" r="3"/><path d="M0 17c0-5 3-7 7-7s7 2 7 7c0 1-14 1-14 0z"/><path d="M14 10c3-.5 6 1 6 5 0 1-3 1.500-4.500 1 0-2-.5-4-1.500-6z"/></svg>
<svg style="left:24px;top:356px" width="18" height="18" viewBox="0 0 18 18"><circle cx="9" cy="9" r="9" fill="#9aabba"/><path d="M9 4v5h4" fill="none" stroke="#12334d" stroke-width="1.800"/></svg>
<svg style="left:24px;top:410px" width="18" height="18" viewBox="0 0 18 18"><path d="M1 1h7l9 9a2 2 0 0 1 0 2l-5 5a2 2 0 0 1-2 0L1 8z" fill="#9aabba" stroke="#9aabba" stroke-linejoin="round"/><circle cx="5" cy="5" r="1.500" fill="#12334d"/></svg>
<svg style="left:24px;top:464px" width="18" height="18" viewBox="0 0 18 18"><path d="M0 3l5-2v14l-5 2zM7 1l4 2v14l-4-2zM13 3l5-2v14l-5 2z" fill="#9aabba"/></svg>
<svg style="left:25px;top:517px" width="16" height="20" viewBox="0 0 16 20"><rect width="16" height="20" rx="2.500" fill="#9aabba"/><rect x="3" y="3" width="10" height="3.500" fill="#12334d" opacity=".5"/><g fill="#12334d" opacity=".7"><rect x="3" y="8.500" width="2" height="1.500"/><rect x="7" y="8.500" width="2" height="1.500"/><rect x="11" y="8.500" width="2" height="1.500"/><rect x="3" y="11.500" width="2" height="1.500"/><rect x="7" y="11.500" width="2" height="1.500"/><rect x="11" y="11.500" width="2" height="1.500"/><rect x="3" y="14.500" width="2" height="1.500"/><rect x="7" y="14.500" width="2" height="1.500"/><rect x="11" y="14.500" width="2" height="1.500"/></g></svg>
<svg style="left:24px;top:571px" width="18" height="20" viewBox="0 0 18 20"><path d="M6 1h6v5h5v9a1 1 0 0 1-1 1H6a1 1 0 0 1-1-1V2a1 1 0 0 1 1-1zM13 1l4 4h-4z" fill="#9aabba"/><path d="M1 5h2v12a1 1 0 0 0 1 1h9v1a1 1 0 0 1-1 1H2a1 1 0 0 1-1-1z" fill="#9aabba"/></svg>
<svg style="left:24px;top:626px" width="18" height="18" viewBox="0 0 18 18"><path d="M8 2v8h8a8 8 0 1 1-8-8z" fill="#9aabba"/><path d="M10 0a8 8 0 0 1 8 8h-8z" fill="#9aabba"/></svg>
<svg style="left:24px;top:680px" width="18" height="18" viewBox="0 0 24 24"><path fill="#9aabba" d="M10 0h4l.7 3.200 2.300 1 2.800-1.800 2.800 2.800L21 8l1 2.300L24 10v4l-3 .7-1 2.300 1.800 2.800-2.800 2.800L17 21l-2.300 1L14 24h-4l-.7-3-2.300-1-2.800 1.800-2.800-2.800L3 17l-1-2.300L0 14v-4l3-.7 1-2.300L2.200 4.200 5 1.400 7.800 3.200 10 2.300z"/><circle cx="12" cy="12" r="4" fill="#12334d"/></svg>
</div></body></html>
